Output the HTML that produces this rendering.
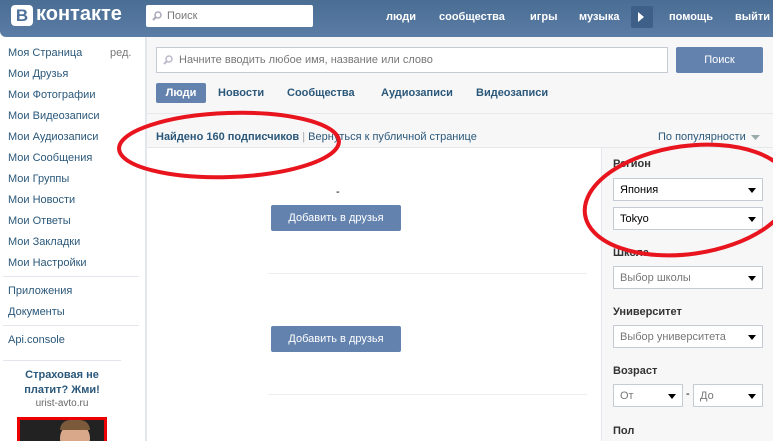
<!DOCTYPE html>
<html><head><meta charset="utf-8"><style>
*{margin:0;padding:0;box-sizing:border-box}
html,body{width:773px;height:441px;overflow:hidden}
body{position:relative;background:#fff;font-family:"Liberation Sans","DejaVu Sans",sans-serif;font-size:11px;color:#2b587a}
.a{position:absolute;white-space:nowrap}
#hdr{left:0;top:0;width:773px;height:37px;background:linear-gradient(#4a6d94,#5b7da5);border-bottom-left-radius:6px}
.nav{color:#fff;font-weight:bold;font-size:11px;top:11px}
.side{left:8px;font-size:11px;color:#2b587a}
.sel{position:absolute;background:#fff;border:1px solid #c5cbd4;height:23px;font-size:11px;color:#000;padding:5px 0 0 6px}
.sel:after{content:"";position:absolute;right:6px;top:9px;border-left:4px solid transparent;border-right:4px solid transparent;border-top:5px solid #000}
.g{color:#777}
.lbl{font-weight:bold;color:#333;font-size:11px;left:613px}
.btn{background:#6383ae;color:#fff;text-align:center;border-radius:2px;font-size:11px}
</style></head><body>
<div class="a" id="hdr"></div>
<div class="a" style="left:11px;top:5px;width:22px;height:21px;background:#fff;border-radius:4px;color:#4e729b;font-weight:bold;font-size:17px;text-align:center;line-height:21px">В</div>
<div class="a" style="left:36px;top:3px;color:#fff;font-weight:bold;font-size:20px">контакте</div>
<div class="a" style="left:146px;top:5px;width:167px;height:22px;background:#fff;border-radius:2px;color:#777;font-size:11px;padding:5px 0 0 21px">Поиск</div>
<svg class="a" style="left:151px;top:10px" width="12" height="12"><circle cx="7" cy="5" r="3" fill="none" stroke="#aab" stroke-width="1.5"/><path d="M5 7L2 10" stroke="#aab" stroke-width="2"/></svg>
<div class="a nav" style="left:386px">люди</div>
<div class="a nav" style="left:439px">сообщества</div>
<div class="a nav" style="left:530px">игры</div>
<div class="a nav" style="left:579px">музыка</div>
<div class="a" style="left:631px;top:6px;width:22px;height:22px;background:#3e6088;border-radius:2px"></div>
<svg class="a" style="left:636px;top:11px" width="10" height="12"><path d="M2 1L8 6L2 11Z" fill="#fff"/></svg>
<div class="a nav" style="left:669px">помощь</div>
<div class="a nav" style="left:735px">выйти</div>

<div class="a side" style="top:47px">Моя Страница</div>
<div class="a" style="left:110px;top:47px;color:#777">ред.</div>
<div class="a side" style="top:68px">Мои Друзья</div>
<div class="a side" style="top:89px">Мои Фотографии</div>
<div class="a side" style="top:110px">Мои Видеозаписи</div>
<div class="a side" style="top:131px">Мои Аудиозаписи</div>
<div class="a side" style="top:152px">Мои Сообщения</div>
<div class="a side" style="top:173px">Мои Группы</div>
<div class="a side" style="top:194px">Мои Новости</div>
<div class="a side" style="top:215px">Мои Ответы</div>
<div class="a side" style="top:236px">Мои Закладки</div>
<div class="a side" style="top:257px">Мои Настройки</div>
<div class="a" style="left:3px;top:276px;width:136px;height:1px;background:#e3e6ec"></div>
<div class="a side" style="top:285px">Приложения</div>
<div class="a side" style="top:306px">Документы</div>
<div class="a" style="left:3px;top:325px;width:136px;height:1px;background:#e3e6ec"></div>
<div class="a side" style="top:334px">Api.console</div>
<div class="a" style="left:3px;top:360px;width:118px;height:1px;background:#e3e6ec"></div>
<div class="a" style="left:12px;top:368px;width:100px;text-align:center;font-weight:bold;font-size:11px;line-height:15px;white-space:normal;color:#2b587a">Страховая не платит? Жми!</div>
<div class="a" style="left:12px;top:398px;width:100px;text-align:center;color:#666;font-size:10px">urist-avto.ru</div>
<div class="a" style="left:17px;top:417px;width:90px;height:24px;background:#e00;padding:3px 3px 0 3px;overflow:hidden"><div style="width:100%;height:30px;background:#222;position:relative"><div style="position:absolute;left:40px;top:3px;width:30px;height:30px;border-radius:50%;background:#d9a88a"></div><div style="position:absolute;left:40px;top:0;width:30px;height:10px;background:#7a5a3a;border-radius:10px 10px 0 0"></div></div></div>

<div class="a" style="left:145px;top:37px;width:2px;height:404px;background:#e3e6ec"></div>
<div class="a" style="left:147px;top:37px;width:626px;height:110px;background:#f7f7f7"></div>
<div class="a" style="left:147px;top:147px;width:626px;height:1px;background:#e7e8ec"></div>
<div class="a" style="left:156px;top:47px;width:512px;height:26px;background:#fff;border:1px solid #c5cbd4;color:#777;font-size:11px;padding:6px 0 0 22px">Начните вводить любое имя, название или слово</div>
<svg class="a" style="left:162px;top:54px" width="12" height="12"><circle cx="7" cy="5" r="3" fill="none" stroke="#bbc" stroke-width="1.5"/><path d="M5 7L2 10" stroke="#bbc" stroke-width="2"/></svg>
<div class="a btn" style="left:676px;top:47px;width:87px;height:26px;padding-top:7px">Поиск</div>
<div class="a btn" style="left:156px;top:83px;width:50px;height:20px;padding-top:4px;font-weight:bold">Люди</div>
<div class="a" style="left:218px;top:87px;font-weight:bold">Новости</div>
<div class="a" style="left:287px;top:87px;font-weight:bold">Сообщества</div>
<div class="a" style="left:381px;top:87px;font-weight:bold">Аудиозаписи</div>
<div class="a" style="left:476px;top:87px;font-weight:bold">Видеозаписи</div>
<div class="a" style="left:147px;top:113px;width:626px;height:1px;background:#e7e8ec"></div>
<div class="a" style="left:156px;top:131px"><b>Найдено 160 подписчиков</b> <span style="color:#aaa">|</span> Вернуться к публичной странице</div>
<div class="a" style="left:658px;top:131px">По популярности</div>
<svg class="a" style="left:751px;top:135px" width="9" height="6"><path d="M0 0H9L4.5 5Z" fill="#9aa"/></svg>

<div class="a" style="left:601px;top:148px;width:172px;height:293px;background:#f7f7f7;border-left:1px solid #e3e6ec"></div>
<div class="a lbl" style="top:158px">Регион</div>
<div class="sel" style="left:613px;top:178px;width:150px">Япония</div>
<div class="sel" style="left:613px;top:207px;width:150px">Tokyo</div>
<div class="a lbl" style="top:247px">Школа</div>
<div class="sel g" style="left:613px;top:266px;width:150px">Выбор школы</div>
<div class="a lbl" style="top:306px">Университет</div>
<div class="sel g" style="left:613px;top:325px;width:150px">Выбор университета</div>
<div class="a lbl" style="top:365px">Возраст</div>
<div class="sel g" style="left:613px;top:384px;width:70px">От</div>
<div class="a" style="left:686px;top:388px;color:#000">-</div>
<div class="sel g" style="left:693px;top:384px;width:70px">До</div>
<div class="a lbl" style="top:425px">Пол</div>

<div class="a" style="left:336px;top:186px;color:#000">-</div>
<div class="a btn" style="left:271px;top:205px;width:130px;height:26px;padding-top:7px">Добавить в друзья</div>
<div class="a" style="left:268px;top:273px;width:319px;height:1px;background:#eee"></div>
<div class="a btn" style="left:271px;top:326px;width:130px;height:26px;padding-top:7px">Добавить в друзья</div>
<div class="a" style="left:268px;top:394px;width:319px;height:1px;background:#eee"></div>

<svg class="a" style="left:0;top:0" width="773" height="441">
<ellipse cx="229" cy="145" rx="110" ry="32" fill="none" stroke="#e8141e" stroke-width="4" transform="rotate(-2 229 145)"/>
<ellipse cx="688" cy="200" rx="104" ry="54" fill="none" stroke="#e8141e" stroke-width="4" transform="rotate(-8 688 200)"/>
</svg>
</body></html>
